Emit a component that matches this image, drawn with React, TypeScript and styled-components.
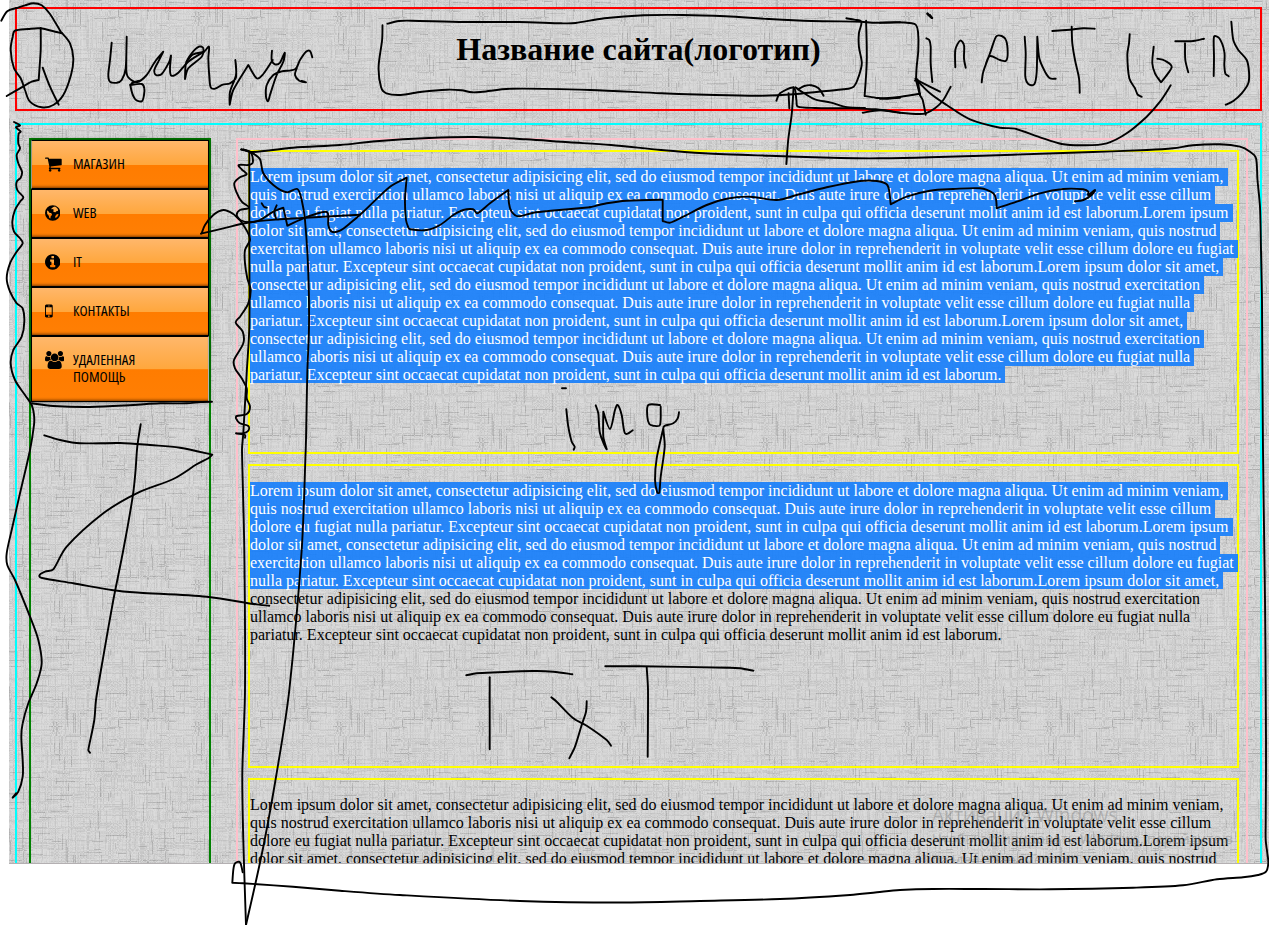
import React from 'react';
import styled, { createGlobalStyle } from 'styled-components';

const Global = createGlobalStyle`
  body { margin: 0; background: #fff; overflow: hidden; }
`;

const Stage = styled.div`
  position: relative;
  width: 1269px;
  height: 925px;
  overflow: hidden;
  background: #fff;
`;

const Page = styled.div`
  position: relative;
  box-sizing: border-box;
  height: 864px;
  margin-left: 9px;
  padding: 7px 7px 0 6px;
  overflow: hidden;
  background: #d5d5d5;
  border-bottom: 1px solid #b4b0b2;
  font: 16px/18px 'Liberation Serif', 'Times New Roman', serif;
  color: #000;
`;

const Linen = styled.svg`
  position: absolute;
  left: 0;
  top: 0;
`;

const Header = styled.header`
  position: relative;
  box-sizing: border-box;
  height: 104px;
  border: 2px solid #f00;
  text-align: center;
`;

const Title = styled.h1`
  margin: 22px 0;
  font-size: 32px;
  line-height: 37px;
  font-weight: bold;
`;

const Shell = styled.div`
  position: relative;
  box-sizing: border-box;
  display: flex;
  align-items: flex-start;
  height: 1200px;
  margin-top: 12px;
  padding: 13px 12px 0;
  border: 2px solid #0ff;
`;

const Sidebar = styled.nav`
  box-sizing: border-box;
  width: 182px;
  height: 1100px;
  border: 2px solid #008000;
`;

const Menu = styled.ul`
  margin: 0;
  padding: 0;
  list-style: none;
  width: 178px;
  box-shadow: 0 0 4px rgba(0, 0, 0, 0.6);
`;

const MenuItem = styled.li<{ $tall?: boolean }>`
  box-sizing: border-box;
  display: flex;
  width: 178px;
  height: ${(p) => (p.$tall ? 66 : 49)}px;
  padding: 14px 0 0 13px;
  border: 1px solid #000;
  background: linear-gradient(to bottom, #ffb76b 0%, #ffa73d 50%, #ff7c00 51%, #ff7f04 100%);
  box-shadow: inset 0 -3px 3px -2px rgba(90, 40, 0, 0.8);
  &:first-child { border-left-color: #8f9a8f; }
  &:last-child { border-right-color: #b4b4b4; }
`;

const IconBox = styled.span`
  width: 27.5px;
  height: 18px;
  flex: none;
`;

const Label = styled.span`
  display: block;
  white-space: pre;
  font: 14px/17px 'Open Sans', sans-serif;
  font-stretch: 75%;
  transform-origin: 0 0;
  transform: scaleX(1.065);
`;

const Main = styled.main`
  box-sizing: border-box;
  width: 1012px;
  height: 1100px;
  margin-left: 25px;
  padding: 10px 7px 0 10px;
  border: 2px solid #ffc0cb;
`;

const Article = styled.section`
  box-sizing: border-box;
  width: 991px;
  height: 304px;
  margin-bottom: 10px;
  padding-top: 16px;
  border: 2px solid #ff0;
`;

const Line = styled.div`
  height: 18px;
  white-space: pre;
`;

const Run = styled.span<{ $on: boolean; $last: boolean }>`
  display: inline-block;
  height: ${(p) => (p.$last ? 17 : 18)}px;
  vertical-align: top;
  color: ${(p) => (p.$on ? '#fff' : '#000')};
  background: ${(p) => (p.$on ? 'rgba(24, 127, 251, 0.92)' : 'transparent')};
`;

const Watermark = styled.div`
  position: absolute;
  left: 923px;
  top: 802px;
  white-space: nowrap;
  color: rgba(130, 130, 130, 0.45);
  font: 14.15px/21px 'Open Sans', sans-serif;
`;

const WatermarkTitle = styled.div`
  font-size: 19.1px;
  line-height: 26px;
`;

const Ink = styled.svg`
  position: absolute;
  left: 0;
  top: 0;
  fill: none;
  stroke: #000;
  stroke-width: 1.9;
  stroke-linecap: round;
  stroke-linejoin: round;
`;

/* Woven background: a 142px tile of short horizontal and vertical threads */
const TILE = 142;
const SHADES = [
  ['#000', 0.034], ['#000', 0.06], ['#000', 0.13], ['#fff', 0.11], ['#fff', 0.07],
] as const;

function weave(): string[] {
  let seed = 4711;
  const rnd = () => {
    seed = (seed * 1103515245 + 12345) % 2147483648;
    return seed / 2147483648;
  };
  const out = SHADES.map(() => '');
  for (let dir = 0; dir < 2; dir++) {
    for (let row = 0; row < TILE; row++) {
      for (let k = 0; k < 7; k++) {
        const r = rnd();
        const shade = r < 0.34 ? 0 : r < 0.52 ? 1 : r < 0.57 ? 2 : r < 0.76 ? 3 : 4;
        const start = Math.floor(rnd() * TILE);
        const len = 6 + Math.floor(rnd() * (shade === 2 ? 16 : 40));
        for (const s of [start, start - TILE]) {
          out[shade] += dir ? `M${row} ${s}v${len}h1v-${len}z` : `M${s} ${row}h${len}v1h-${len}z`;
        }
      }
    }
  }
  out[2] += 'M15 120h1v21h-1z';
  return out;
}
const THREADS = weave();

const CART =
  'M704 1536q0 52-38 90t-90 38-90-38-38-90 38-90 90-38 90 38 38 90zm896 0q0 52-38 90t-90 38-90-38-38-90 38-90 90-38 90 38 38 90zm128-1088v512q0 24-16.5 42.5t-40.5 21.5l-1044 122q13 60 13 70 0 16-24 64h920q26 0 45 19t19 45-19 45-45 19h-1024q-26 0-45-19t-19-45q0-11 8-31.5t16-36 21.5-40 15.5-29.5l-177-823h-204q-26 0-45-19t-19-45 19-45 45-19h256q16 0 28.5 6.5t19.5 15.5 13 24.5 8 26 5.5 29.5 4.5 26h1201q26 0 45 19t19 45z';
const INFO =
  'M1152 1376v-160q0-14-9-23t-23-9h-96v-512q0-14-9-23t-23-9h-320q-14 0-23 9t-9 23v160q0 14 9 23t23 9h96v320h-96q-14 0-23 9t-9 23v160q0 14 9 23t23 9h448q14 0 23-9t9-23zm-128-896v-160q0-14-9-23t-23-9h-192q-14 0-23 9t-9 23v160q0 14 9 23t23 9h192q14 0 23-9t9-23zm640 416q0 209-103 385.5t-279.5 279.5-385.5 103-385.5-103-279.5-279.5-103-385.5 103-385.5 279.5-279.5 385.5-103 385.5 103 279.5 279.5 103 385.5z';
const MOBILE =
  'M976 1408q0-33-23.5-56.5t-56.5-23.5-56.5 23.5-23.5 56.5 23.5 56.5 56.5 23.5 56.5-23.5 23.5-56.5zm208-160v-704q0-13-9.5-22.5t-22.5-9.5h-512q-13 0-22.5 9.5t-9.5 22.5v704q0 13 9.5 22.5t22.5 9.5h512q13 0 22.5-9.5t9.5-22.5zm-192-848q0-16-16-16h-160q-16 0-16 16t16 16h160q16 0 16-16zm288-16v1024q0 52-38 90t-90 38h-512q-52 0-90-38t-38-90v-1024q0-52 38-90t90-38h512q52 0 90 38t38 90z';
const USERS =
  'M529 896q-162 5-265 128h-134q-82 0-138-40.5t-56-118.5q0-353 124-353 6 0 43.5 21t97.5 42.5 119 21.5q67 0 133-23-5 37-5 66 0 139 81 256zm1071 637q0 120-73 189.5t-194 69.5h-874q-121 0-194-69.5t-73-189.5q0-53 3.5-103.5t14-109 26.5-108.5 43-97.5 62-81 85.5-53.5 111.5-20q10 0 43 21.5t73 48 107 48 135 21.5 135-21.5 107-48 73-48 43-21.5q61 0 111.5 20t85.5 53.5 62 81 43 97.5 26.5 108.5 14 109 3.5 103.5zm-1024-1277q0 106-75 181t-181 75-181-75-75-181 75-181 181-75 181 75 75 181zm704 384q0 159-112.5 271.5t-271.5 112.5-271.5-112.5-112.5-271.5 112.5-271.5 271.5-112.5 271.5 112.5 112.5 271.5zm576 225q0 78-56 118.5t-138 40.5h-134q-103-123-265-128 81-117 81-256 0-29-5-66 66 23 133 23 59 0 119-21.5t97.5-42.5 43.5-21q124 0 124 353zm-128-609q0 106-75 181t-181 75-181-75-75-181 75-181 181-75 181 75 75 181z';
const GLOBE =
  'M896 128a768 768 0 1 0 0 1536a768 768 0 1 0 0-1536zM960 300L1130 250L1330 390L1440 560L1400 700L1250 720L1180 820L1010 800L930 690L1020 590L900 500L800 540L760 440zM330 640L450 700L560 860L700 900L830 1000L800 1130L690 1240L670 1440L560 1400L500 1180L350 1000zM1230 1080L1400 1000L1480 1050L1380 1250L1200 1400L1130 1300z';

const ITEMS = [
  { label: 'МАГАЗИН', d: CART, x: 64, w: 1664 },
  { label: 'WEB', d: GLOBE, x: 128, w: 1536 },
  { label: 'IT', d: INFO, x: 128, w: 1536 },
  { label: 'КОНТАКТЫ', d: MOBILE, x: 512, w: 768 },
  { label: 'УДАЛЕННАЯ\nПОМОЩЬ', d: USERS, x: -64, w: 1920 },
];

const OPEN = [
  'Lorem ipsum dolor sit amet, consectetur adipisicing elit, sed do eiusmod tempor incididunt ut labore et dolore magna aliqua. Ut enim ad minim veniam, ',
  'quis nostrud exercitation ullamco laboris nisi ut aliquip ex ea commodo consequat. Duis aute irure dolor in reprehenderit in voluptate velit esse cillum ',
  'dolore eu fugiat nulla pariatur. Excepteur sint occaecat cupidatat non proident, sunt in culpa qui officia deserunt mollit anim id est laborum.Lorem ipsum ',
  'dolor sit amet, consectetur adipisicing elit, sed do eiusmod tempor incididunt ut labore et dolore magna aliqua. Ut enim ad minim veniam, quis nostrud ',
  'exercitation ullamco laboris nisi ut aliquip ex ea commodo consequat. Duis aute irure dolor in reprehenderit in voluptate velit esse cillum dolore eu fugiat ',
  'nulla pariatur. Excepteur sint occaecat cupidatat non proident, sunt in culpa qui officia deserunt mollit anim id est laborum.Lorem ipsum dolor sit amet, ',
];
const MIDDLE = [
  'consectetur adipisicing elit, sed do eiusmod tempor incididunt ut labore et dolore magna aliqua. Ut enim ad minim veniam, quis nostrud exercitation ',
  'ullamco laboris nisi ut aliquip ex ea commodo consequat. Duis aute irure dolor in reprehenderit in voluptate velit esse cillum dolore eu fugiat nulla ',
];
const TAIL = 'pariatur. Excepteur sint occaecat cupidatat non proident, sunt in culpa qui officia deserunt mollit anim id est laborum. ';
const TAIL_MORE = 'pariatur. Excepteur sint occaecat cupidatat non proident, sunt in culpa qui officia deserunt mollit anim id est laborum.Lorem ipsum dolor sit amet, ';

const ARTICLES = [
  { lines: [...OPEN, ...MIDDLE, TAIL_MORE, ...MIDDLE, TAIL], selected: 12 },
  { lines: [...OPEN, ...MIDDLE, TAIL], selected: 6 },
  { lines: OPEN.slice(0, 4), selected: 0 },
];

/* Pen strokes, grouped by the sheet area they were drawn in */
type Area = { x: number; y: number; sx: number; sy: number; strokes: string[] };
const AREAS: Area[] = [
  {
    x: 0, y: 0, sx: 3, sy: 3,
    strokes: [
      '4 62 22 34 50 24 75 16 100 10 125 16 150 42 185 100 185 100 170 96 120 85 85 87 45 92 38 110 32 150 42 205 62 235 75 270 90 305 125 322 160 315 190 285 213 225 220 175 210 130 185 98',
      '122 84 122 150 116 240 116 240 95 245 60 265 20 288',
      '128 203 150 260 176 314',
      '335 128 330 180 325 225 330 245 350 248 365 240 377 205 380 110 380 110 379 210 385 232 412 246 440 225 465 185 490 155 490 155 475 185 463 210 468 225 485 222 508 185 513 167 510 205 514 227 535 218 565 185 612 155',
      '390 255 425 252 433 265 432 285 425 304 405 297 392 262 395 250 415 243',
      '555 237 558 190 575 160 597 140 610 145 605 170 565 205 555 237',
      '560 185 580 163 612 155 627 140 625 175 628 230 632 262 645 266 668 254 690 250 708 232 706 180 708 225 690 275 689 314 689 314 700 270 745 195 745 195 770 235 790 222 818 180',
      '816 152 815 180 825 193 840 188 854 158 850 185 830 225 810 285 804 304 798 290 800 255 820 225 845 214 885 208 900 180 918 155 930 153 937 172',
      '890 205 885 225 898 242 918 247 905 243',
      '42 366 60 376 48 382 62 395 56 400 55 430 60 445 50 465 55 490 66 515 62 533 50 545 52 570 70 592 60 605 45 630 37 665 42 695 60 715 68 730 50 755 30 790 20 835 30 875 50 910 68 925 73 965 65 1010 40 1050 32 1090 45 1140 75 1185 95 1215 102 1245 102 1275 90 1350 60 1480 35 1590 20 1660 22 1695 45 1740 90 1850 115 1920 125 1990 110 2050 85 2110 68 2170 64 2210 68 2280 68 2330 55 2375 38 2393 48 2380',
      '96 1210 160 1218 270 1221 400 1215 480 1210 560 1210 600 1206 636 1205',
    ],
  },
  {
    x: 340, y: 0, sx: 2.8, sy: 3,
    strokes: [
      '133 71 165 63 200 62 350 66 500 66 620 70 660 69 740 55 850 46 960 45 1080 49 1200 57 1320 63 1460 65 1490 68 1568 67',
      '1418 55 1440 59 1460 66 1453 100 1453 140 1461 190 1452 230 1438 260 1410 268 1340 275 1270 283 1180 287 1050 285 900 280 700 270 480 266 400 275 370 277 340 271 300 269 230 275 170 285 130 280 115 262 108 200 118 120 119 76',
      '1473 62 1475 180 1469 288 1469 288 1500 293 1530 296 1568 293',
      '1250 492 1255 420 1265 340 1270 262',
      '1222 302 1232 280 1270 263 1278 300 1282 320 1330 324 1420 325 1500 328 1568 338',
      '1258 325 1256 280',
      '1275 262 1300 280 1330 298 1375 308 1420 322 1470 324',
      '1283 268 1300 258 1320 256 1340 265 1354 287',
    ],
  },
  {
    x: 880, y: 0, sx: 3, sy: 3,
    strokes: [
      '0 68 50 67 95 70 108 75 114 95 115 150 110 200 108 240',
      '0 296 50 292 120 281',
      '-52 338 0 331 60 338 120 342 137 340 165 325 190 300 212 260',
      '108 240 120 285 128 300 137 344',
      '106 236 120 245 180 275',
      '105 242 112 238 120 285',
      '108 238 150 280 200 315 270 358 360 383 405 386 480 412 545 432 610 436 680 430 740 400 800 350 840 305 872 256',
      '142 40 157 54', '142 42 155 54 150 45',
      '139 115 148 120 152 140 152 190 157 246',
      '226 202 226 150 240 122 252 135 252 175 257 203',
      '305 247 310 215 330 160 348 110 365 108 378 120 383 160 378 182 360 180 330 168 318 190',
      '434 110 437 160 436 230 445 252 463 253 470 215 472 110 472 110 478 175 495 215 510 235 527 236',
      '517 93 570 89 610 85 644 86',
      '575 80 577 130 585 180 597 235 599 278',
      '749 103 747 130 742 165 748 235 765 265 773 284 785 290',
      '821 140 817 190 825 220 843 247 843 247 875 202 855 182 832 176',
      '886 124 940 123 972 116',
      '915 130 916 180 925 217',
      '1001 228 1002 175 1002 110 1018 115 1033 155 1033 195 1036 220 1046 229',
      '1054 65 1060 120 1075 150 1100 180 1107 215 1105 250 1085 280 1060 303 1037 314',
    ],
  },
  {
    x: 0, y: 0, sx: 1, sy: 1,
    strokes: [
      '241 149.5 253 152 293 147.7 340 145 376 141.3 429 138 476 137 526 139.3 569 142.3 611 145 661 150 704 153.3 769 155.7 840 158 880 158.3 930 157.3 1013 154.7 1093 152 1147 150 1173 148.3 1193 145.3 1220 144.3 1240 146.7 1250 151.7 1256 158 1257.5 180 1260 207 1261 250 1262 300 1263 450 1265 600 1266 740 1265.7 823 1265.7 840 1267.3 853 1268.3 863 1266 871.7 1258 875 1243 877.3 1217 879.3 1183 885.3 1133 887.7 1050 889.3 983 889 933 889 900 890 877 892.3 850 895 780 899 700 901 620 902.5 520 901 400 895 340 890.7 293 886.7 243 883.3 232.3 882.7 232.3 882.7 233.3 870 235 863.3 240 862.3 242.7 872.3',
    ],
  },
  {
    x: 190, y: 140, sx: 3, sy: 3,
    strokes: [
      '155 28 175 34 185 42 188 68 175 75 146 75 155 88 170 103 150 112 133 130 140 158 155 185 177 203 150 210 140 225 150 240 172 275 180 300 165 330 165 370 172 415 182 450 175 490 150 530 137 548 158 575 160 610 132 660 135 685 155 715 170 745 170 775 180 800 170 822 140 828 138 835 150 850 175 858 175 872 160 880 138 880 165 885 165 893',
      '178 40 178 300 178 560 170 700 160 880 156 930 163 1230 165 1650 157 1900 160 2100 168 2355',
      '168 2355 220 2120 265 1870 298 1650 335 1230 347 930 348 900 352 700 357 560 355 400 345 240 335 180 322 147 290 157 250 135 220 100 210 58 185 38 160 28',
      '35 280 45 255 70 225 100 210 130 222 150 240 180 247 210 240 250 215 280 203 280 203 292 257 292 257 340 235 390 218 413 218 415 255 425 275 450 272 480 250 520 215 600 140 650 113 650 113 645 180 648 240 655 262 660 268 710 270 750 255 790 225 820 210 850 208 862 220 900 190 955 150 955 150 957 190 965 215 985 229 1030 218 1100 211 1200 202',
      '33 281 100 265 180 247 270 238 400 230 510 224',
      '215 190 222 200 230 203',
      '260 196 253 215 258 235',
    ],
  },
  {
    x: 580, y: 150, sx: 3, sy: 3,
    strokes: [
      '30 172 80 160 140 152 248 149 248 149 248 213 248 213 270 218 310 200 380 165 440 146 510 140 590 150 650 135 740 112 840 93 890 93 920 103 928 125 932 163 932 163 980 140 1050 122 1120 117 1200 115 1240 130 1248 148 1250 175 1250 175 1310 155 1380 130 1450 117 1510 118 1525 125 1525 135 1545 120 1535 135 1510 150 1485 154',
    ],
  },
  {
    x: 0, y: 400, sx: 3, sy: 3,
    strokes: [
      '133 106 180 120 240 130 360 129 450 135 540 143 637 164 637 164 625 175 590 193 520 237 410 280 310 340 200 440 160 508 135 515 118 527 130 535 220 550 340 571 420 578 620 590 760 612 808 617',
      '422 73 412 140 406 220 398 290 370 450 340 600 310 770 288 900 283 960 265 1050 270 1058',
    ],
  },
  {
    x: 340, y: 370, sx: 3, sy: 3,
    strokes: [
      '666 55 678 55',
      '679 118 685 170 695 215 704 230 701 239',
      '767 106 775 130 780 190 800 238 790 200 790 125 790 125 810 177 825 120 833 105 845 135 855 190 878 181',
      '960 105 925 105 922 140 928 162 940 167 960 165 962 110',
      '1017 127 1013 145 1000 160 975 167 970 175 974 230 962 320 958 368 952 368 945 330 950 265 970 175',
      '379 916 410 910 580 903 640 905 697 913',
      '449 922 449 1138',
      '634 982 650 995 700 1045 740 1067 800 1110 813 1127',
      '740 994 738 1025 725 1065 705 1130 688 1165',
      '796 889 900 889 1160 893 1200 895 1240 902',
      '920 892 924 960 923 1160',
    ],
  },
];

/* Smooth curve through the points; a repeated point keeps its corner sharp */
function strokePath(area: Area, source: string): string {
  const n = source.split(' ').map(Number);
  const pts: [number, number][] = [];
  for (let i = 0; i < n.length; i += 2) {
    pts.push([area.x + n[i] / area.sx, area.y + n[i + 1] / area.sy]);
  }
  let d = `M${pts[0][0].toFixed(1)} ${pts[0][1].toFixed(1)}`;
  for (let i = 0; i < pts.length - 1; i++) {
    const a = pts[i];
    const b = pts[i + 1];
    const before = pts[i - 1] ?? a;
    const after = pts[i + 2] ?? b;
    const reach = Math.hypot(b[0] - a[0], b[1] - a[1]) / 3;
    const handle = (from: [number, number], to: [number, number]) => {
      const dx = (to[0] - from[0]) / 6;
      const dy = (to[1] - from[1]) / 6;
      const k = Math.min(1, reach / (Math.hypot(dx, dy) || 1));
      return [dx * k, dy * k];
    };
    const h1 = handle(before, b);
    const h2 = handle(a, after);
    d += `C${(a[0] + h1[0]).toFixed(1)} ${(a[1] + h1[1]).toFixed(1)} ${(b[0] - h2[0]).toFixed(1)} ${(b[1] - h2[1]).toFixed(1)} ${b[0].toFixed(1)} ${b[1].toFixed(1)}`;
  }
  return d;
}

export default function App() {
  return (
    <Stage>
      <Global />
      <Page>
        <Linen width="1260" height="863">
          <defs>
            <pattern id="linen" x="-2" y="-1" width={TILE} height={TILE} patternUnits="userSpaceOnUse">
              {THREADS.map((d, i) => (
                <path key={i} d={d} fill={SHADES[i][0]} fillOpacity={SHADES[i][1]} shapeRendering="crispEdges" />
              ))}
            </pattern>
          </defs>
          <rect width="1260" height="863" fill="url(#linen)" />
        </Linen>
        <Header>
          <Title>Название сайта(логотип)</Title>
        </Header>
        <Shell>
          <Sidebar>
            <Menu>
              {ITEMS.map((item) => (
                <MenuItem key={item.label} $tall={item.label.includes('\n')}>
                  <IconBox>
                    <svg width={(item.w / 1792) * 18} height="18" viewBox={`${item.x} 0 ${item.w} 1792`}>
                      <path d={item.d} fillRule={item.d === GLOBE ? 'evenodd' : 'nonzero'} />
                    </svg>
                  </IconBox>
                  <Label>{item.label}</Label>
                </MenuItem>
              ))}
            </Menu>
          </Sidebar>
          <Main>
            {ARTICLES.map((article, i) => (
              <Article key={i}>
                {article.lines.map((line, j) => (
                  <Line key={j}>
                    <Run $on={j < article.selected} $last={j === article.selected - 1}>{line}</Run>
                  </Line>
                ))}
              </Article>
            ))}
          </Main>
        </Shell>
        <Watermark>
          <WatermarkTitle>Активация Windows</WatermarkTitle>
          <div>Чтобы активировать Windows, перейдите в</div>
          <div>раздел "Параметры".</div>
        </Watermark>
      </Page>
      <Ink width="1269" height="925">
        {AREAS.map((area, i) => (
          <g key={i}>
            {area.strokes.map((s, j) => (
              <path key={j} d={strokePath(area, s)} />
            ))}
          </g>
        ))}
      </Ink>
    </Stage>
  );
}
